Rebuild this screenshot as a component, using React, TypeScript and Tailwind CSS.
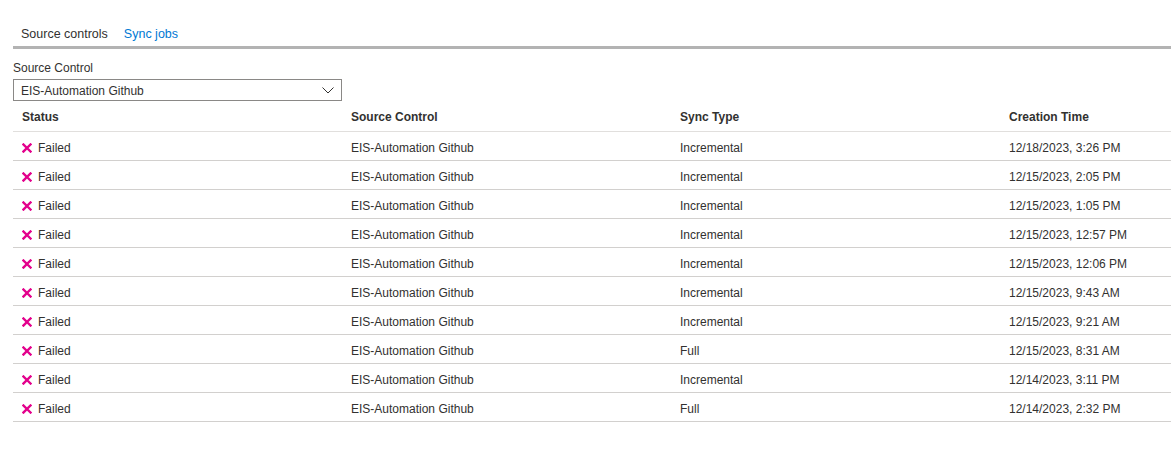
const ROWS = [
  { type: "Incremental", time: "12/18/2023, 3:26 PM" },
  { type: "Incremental", time: "12/15/2023, 2:05 PM" },
  { type: "Incremental", time: "12/15/2023, 1:05 PM" },
  { type: "Incremental", time: "12/15/2023, 12:57 PM" },
  { type: "Incremental", time: "12/15/2023, 12:06 PM" },
  { type: "Incremental", time: "12/15/2023, 9:43 AM" },
  { type: "Incremental", time: "12/15/2023, 9:21 AM" },
  { type: "Full", time: "12/15/2023, 8:31 AM" },
  { type: "Incremental", time: "12/14/2023, 3:11 PM" },
  { type: "Full", time: "12/14/2023, 2:32 PM" },
]

const cols = "grid grid-cols-[329px_329px_329px_1fr]"

function FailIcon() {
  return (
    <svg width="10" height="10" viewBox="0 0 10 10" fill="none" stroke="#e3008c" strokeWidth="2.4" strokeLinecap="square">
      <path d="M1.5 1.5 L8.5 8.5 M8.5 1.5 L1.5 8.5" />
    </svg>
  )
}

export default function App() {
  return (
    <div className="w-[1171px] h-[466px] bg-white text-[#323130] text-[12px] overflow-hidden" style={{ fontFamily: "'Segoe UI', 'Liberation Sans', Arial, sans-serif" }}>
      {/* Tabs */}
      <div className="pl-[13px] pt-[26px]">
        <div className="flex gap-[16px] pl-[8px] text-[12.5px] leading-[17px] pb-[3px]">
          <span>Source controls</span>
          <span className="text-[#0078d4]">Sync jobs</span>
        </div>
        <div className="h-[3px] bg-[#b3b3b3]" />
      </div>

      {/* Filter */}
      <div className="pl-[13px] pt-[11px]">
        <div className="leading-[16px]">Source Control</div>
        <div className="mt-[3px] w-[329px] h-[22px] border border-[#8a8886] flex items-center justify-between pl-[7px] pr-[7px] pt-[1px]">
          <span>EIS-Automation Github</span>
          <svg width="12" height="7" viewBox="0 0 12 7" fill="none" stroke="#323130" strokeWidth="1">
            <path d="M0.5 0.5 L6 6 L11.5 0.5" />
          </svg>
        </div>
      </div>

      {/* Table */}
      <div className="ml-[13px]">
        <div className={`${cols} h-[31px] items-center border-b border-[#e1dfdd] font-semibold pt-[2px]`}>
          <div className="pl-[9px]">Status</div>
          <div className="pl-[9px]">Source Control</div>
          <div className="pl-[9px]">Sync Type</div>
          <div className="pl-[9px]">Creation Time</div>
        </div>
        {ROWS.map((r, i) => (
          <div key={i} className={`${cols} h-[29px] items-center border-b border-[#d2d0ce] pt-[3px]`}>
            <div className="pl-[9px] flex items-center gap-[6px]">
              <FailIcon />
              <span>Failed</span>
            </div>
            <div className="pl-[9px]">EIS-Automation Github</div>
            <div className="pl-[9px]">{r.type}</div>
            <div className="pl-[9px]">{r.time}</div>
          </div>
        ))}
      </div>
    </div>
  )
}
